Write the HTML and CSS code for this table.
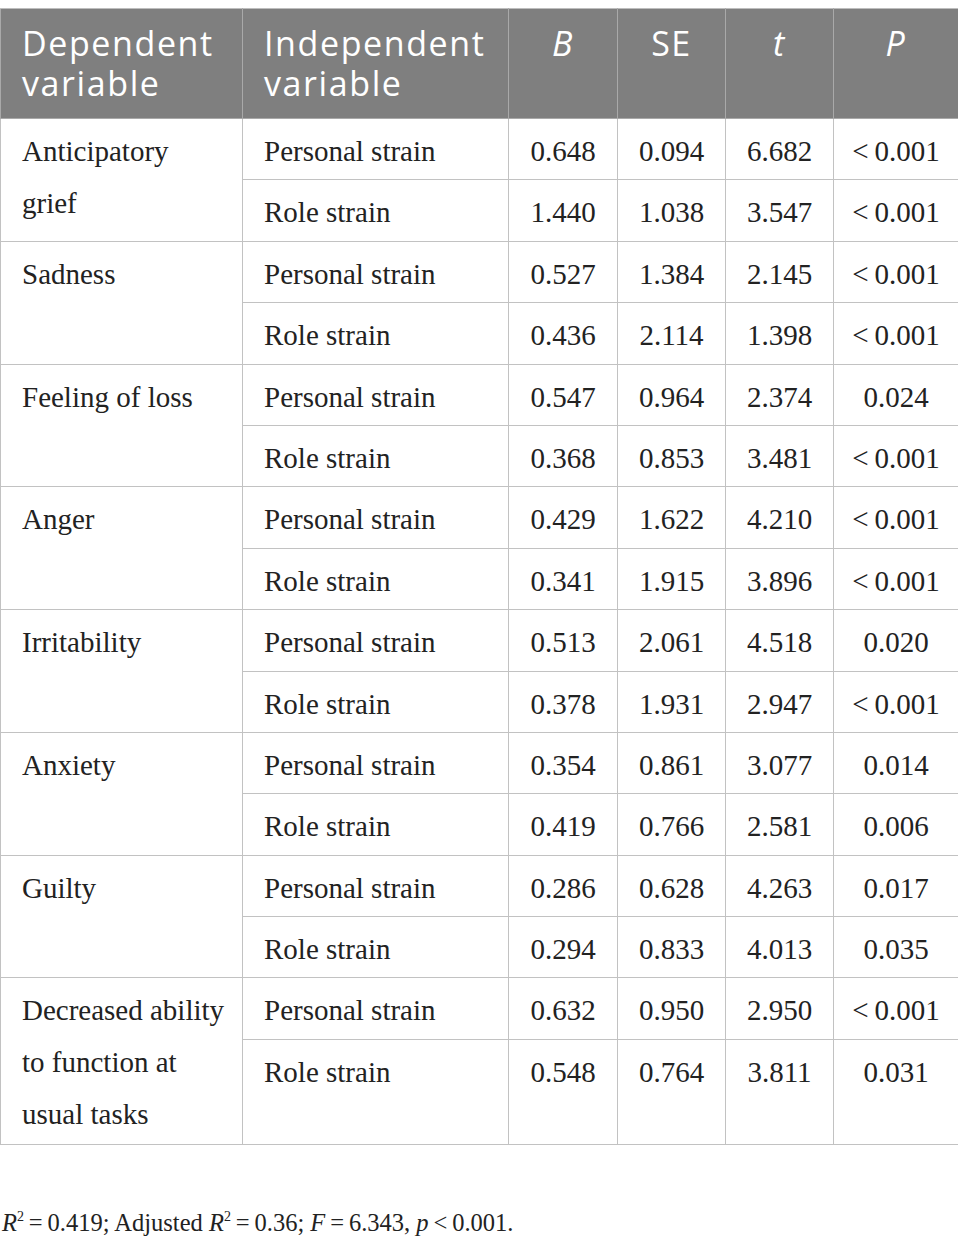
FILE: index.html
```html
<!DOCTYPE html>
<html>
<head>
<meta charset="utf-8">
<link rel="stylesheet" href="styles.css">
</head>
<body>
<div class="page">
<table class="reg">
  <colgroup>
    <col class="c1"><col class="c2"><col class="c3"><col class="c4"><col class="c5"><col class="c6">
  </colgroup>
  <thead>
    <tr>
      <th class="left">Dependent variable</th>
      <th class="left">Independent variable</th>
      <th><i>B</i></th>
      <th>SE</th>
      <th><i>t</i></th>
      <th><i>P</i></th>
    </tr>
  </thead>
  <tbody>
    <tr><td class="dep" rowspan="2">Anticipatory grief</td><td class="ind">Personal strain</td><td>0.648</td><td>0.094</td><td>6.682</td><td>&lt;&thinsp;0.001</td></tr>
    <tr><td class="ind">Role strain</td><td>1.440</td><td>1.038</td><td>3.547</td><td>&lt;&thinsp;0.001</td></tr>
    <tr><td class="dep" rowspan="2">Sadness</td><td class="ind">Personal strain</td><td>0.527</td><td>1.384</td><td>2.145</td><td>&lt;&thinsp;0.001</td></tr>
    <tr><td class="ind">Role strain</td><td>0.436</td><td>2.114</td><td>1.398</td><td>&lt;&thinsp;0.001</td></tr>
    <tr><td class="dep" rowspan="2">Feeling of loss</td><td class="ind">Personal strain</td><td>0.547</td><td>0.964</td><td>2.374</td><td>0.024</td></tr>
    <tr><td class="ind">Role strain</td><td>0.368</td><td>0.853</td><td>3.481</td><td>&lt;&thinsp;0.001</td></tr>
    <tr><td class="dep" rowspan="2">Anger</td><td class="ind">Personal strain</td><td>0.429</td><td>1.622</td><td>4.210</td><td>&lt;&thinsp;0.001</td></tr>
    <tr><td class="ind">Role strain</td><td>0.341</td><td>1.915</td><td>3.896</td><td>&lt;&thinsp;0.001</td></tr>
    <tr><td class="dep" rowspan="2">Irritability</td><td class="ind">Personal strain</td><td>0.513</td><td>2.061</td><td>4.518</td><td>0.020</td></tr>
    <tr><td class="ind">Role strain</td><td>0.378</td><td>1.931</td><td>2.947</td><td>&lt;&thinsp;0.001</td></tr>
    <tr><td class="dep" rowspan="2">Anxiety</td><td class="ind">Personal strain</td><td>0.354</td><td>0.861</td><td>3.077</td><td>0.014</td></tr>
    <tr><td class="ind">Role strain</td><td>0.419</td><td>0.766</td><td>2.581</td><td>0.006</td></tr>
    <tr><td class="dep" rowspan="2">Guilty</td><td class="ind">Personal strain</td><td>0.286</td><td>0.628</td><td>4.263</td><td>0.017</td></tr>
    <tr><td class="ind">Role strain</td><td>0.294</td><td>0.833</td><td>4.013</td><td>0.035</td></tr>
    <tr><td class="dep" rowspan="2">Decreased ability to function at usual tasks</td><td class="ind">Personal strain</td><td>0.632</td><td>0.950</td><td>2.950</td><td>&lt;&thinsp;0.001</td></tr>
    <tr class="tall"><td class="ind">Role strain</td><td>0.548</td><td>0.764</td><td>3.811</td><td>0.031</td></tr>
  </tbody>
</table>
<p class="note"><i>R</i><sup>2</sup>&thinsp;=&thinsp;0.419; Adjusted <i>R</i><sup>2</sup>&thinsp;=&thinsp;0.36; <i>F</i>&thinsp;=&thinsp;6.343, <i>p</i>&thinsp;&lt;&thinsp;0.001.</p>
</div>
</body>
</html>
```

FILE: styles.css
```css
html, body {
  margin: 0;
  padding: 0;
  background: #ffffff;
}

.page {
  padding-top: 8px;
  width: 958px;
}

.reg {
  width: 958px;
  border-collapse: collapse;
  table-layout: fixed;
  font-family: "Liberation Serif", "Times New Roman", serif;
  color: #222222;
}

.c1 { width: 242px; }
.c2 { width: 266px; }
.c3 { width: 109px; }
.c4 { width: 108px; }
.c5 { width: 108px; }
.c6 { width: 125px; }

.reg th {
  background: #7f7f7f;
  color: #ffffff;
  font-family: "Open Sans", "Liberation Sans", sans-serif;
  font-weight: 400;
  font-size: 34px;
  line-height: 40px;
  letter-spacing: 1.6px;
  text-align: center;
  vertical-align: top;
  padding: 14px 6px 15px 6px;
  border: 1px solid #a9a9a9;
  border-top-color: #bdbdbd;
}

.reg th.left {
  text-align: left;
  padding-left: 21px;
}

.reg td {
  font-size: 29px;
  line-height: 52px;
  text-align: center;
  vertical-align: top;
  padding: 6px 8px 2.4px 8px;
  border: 1px solid #c2c2c2;
}

.reg td.dep,
.reg td.ind {
  text-align: left;
  padding-left: 21px;
}

.reg td.dep {
  padding-right: 16px;
}

.reg tr.tall td {
  height: 96px;
}

.note {
  margin: 63px 0 0 2px;
  font-family: "Liberation Serif", "Times New Roman", serif;
  font-size: 24.5px;
  line-height: 30px;
  color: #222222;
}

.note sup {
  font-size: 14px;
  line-height: 0;
  vertical-align: 10px;
}
```
